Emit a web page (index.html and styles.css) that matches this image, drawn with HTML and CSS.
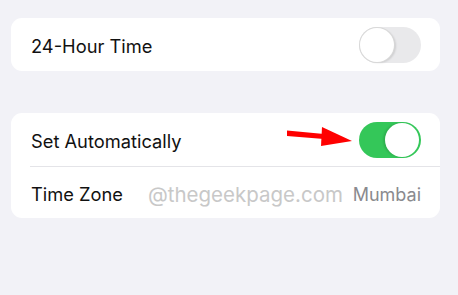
FILE: index.html
```html
<!DOCTYPE html>
<html>
<head>
<meta charset="utf-8">
<link rel="stylesheet" href="styles.css">
</head>
<body>
<div class="page">
  <div class="card">
    <div class="row">
      <span class="label">24-Hour Time</span>
      <span class="toggle off"><span class="knob"></span></span>
    </div>
  </div>
  <div class="card second">
    <div class="row">
      <span class="label">Set Automatically</span>
      <span class="toggle on"><span class="knob"></span></span>
    </div>
    <div class="sep"></div>
    <div class="row">
      <span class="label">Time Zone</span>
      <span class="watermark">@thegeekpage.com</span>
      <span class="value">Mumbai</span>
    </div>
    <svg class="arrow" width="70" height="24" viewBox="0 0 70 24">
      <polygon points="0,3.5 37,7 37,12 0,9" fill="#ff0000"/>
      <polygon points="35,0 65,14 34,19" fill="#ff0000"/>
    </svg>
  </div>
</div>
</body>
</html>
```

FILE: styles.css
```css
html, body {
  margin: 0;
  padding: 0;
  background: #f2f2f7;
}
body {
  width: 458px;
  height: 295px;
  overflow: hidden;
  font-family: "Inter", "Liberation Sans", sans-serif;
}
.page {
  padding: 18px 18px 0 11px;
  display: flex;
  flex-direction: column;
  gap: 42px;
}
.card {
  background: #ffffff;
  border-radius: 11px;
  position: relative;
}
.row {
  height: 53px;
  display: flex;
  align-items: center;
  padding: 0 19px 0 20px;
}
.label {
  font-size: 18.3px;
  color: #111111;
  padding-top: 3px;
}
.sep {
  height: 1px;
  background: #e4e4e8;
  margin-left: 19px;
}
.second .row:last-of-type {
  height: 51px;
}
.toggle {
  margin-left: auto;
  width: 62px;
  height: 36px;
  border-radius: 18px;
  position: relative;
  box-sizing: border-box;
}
.toggle.off {
  background: #e9e9eb;
}
.toggle.on {
  background: #34c759;
}
.knob {
  position: absolute;
  top: 1px;
  width: 34px;
  height: 34px;
  border-radius: 50%;
  background: #ffffff;
  box-sizing: border-box;
}
.off .knob {
  left: 1px;
  box-shadow: 0 0 0 1px #d8d8d8, 2px 1px 2px rgba(0,0,0,0.12);
}
.on .knob {
  right: 2px;
  box-shadow: -2px 0 2px rgba(0,0,0,0.12);
}
.watermark {
  margin-left: 25px;
  font-size: 20.5px;
  color: #c8c8c8;
  padding-top: 3px;
}
.value {
  margin-left: auto;
  font-size: 18px;
  color: #8a8a8e;
  padding-top: 3px;
}
.arrow {
  position: absolute;
  left: 276px;
  top: 14px;
}
```
